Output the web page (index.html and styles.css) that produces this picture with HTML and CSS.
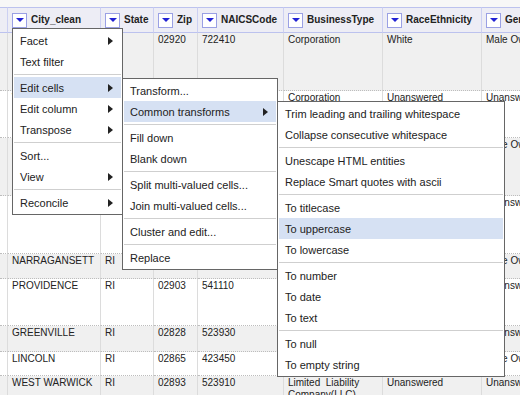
FILE: index.html
```html
<!DOCTYPE html>
<html lang="en">
<head>
<meta charset="UTF-8" />
<title>Edit cells - Common transforms</title>
<link rel="stylesheet" href="styles.css">
</head>
<body>

<table class="grid">
  <colgroup>
    <col class="c-num"><col class="c-city"><col class="c-state"><col class="c-zip">
    <col class="c-naics"><col class="c-type"><col class="c-race"><col class="c-gender">
  </colgroup>
  <thead>
    <tr>
      <th></th>
      <th><div class="hd"><span class="drop"></span>City_clean</div></th>
      <th><div class="hd"><span class="drop"></span>State</div></th>
      <th><div class="hd"><span class="drop"></span>Zip</div></th>
      <th><div class="hd"><span class="drop"></span>NAICSCode</div></th>
      <th><div class="hd"><span class="drop"></span>BusinessType</div></th>
      <th><div class="hd"><span class="drop"></span>RaceEthnicity</div></th>
      <th><div class="hd"><span class="drop"></span>Gender</div></th>
    </tr>
  </thead>
  <tbody>
    <tr class="odd h58">
      <td></td><td>CRANSTON</td><td>RI</td><td>02920</td><td>722410</td>
      <td>Corporation</td><td>White</td><td class="nowrap">Male Owned</td>
    </tr>
    <tr class="h47">
      <td></td><td>WARWICK</td><td>RI</td><td>02886</td><td>541611</td>
      <td>Corporation</td><td>Unanswered</td><td class="nowrap">Unanswered</td>
    </tr>
    <tr class="odd h58">
      <td></td><td>PROVIDENCE</td><td>RI</td><td>02908</td><td>621210</td>
      <td>Corporation</td><td>White</td><td class="nowrap">Male Owned</td>
    </tr>
    <tr class="h58">
      <td></td><td>NEWPORT</td><td>RI</td><td>02840</td><td>722511</td>
      <td>Sole Proprietorship</td><td>Unanswered</td><td class="nowrap">Unanswered</td>
    </tr>
    <tr class="odd h25">
      <td></td><td>NARRAGANSETT</td><td>RI</td><td>02882</td><td>713940</td>
      <td>Corporation</td><td>White</td><td class="nowrap">Male Owned</td>
    </tr>
    <tr class="h47">
      <td></td><td>PROVIDENCE</td><td>RI</td><td>02903</td><td>541110</td>
      <td>Corporation</td><td>Unanswered</td><td class="nowrap">Unanswered</td>
    </tr>
    <tr class="odd h26">
      <td></td><td>GREENVILLE</td><td>RI</td><td>02828</td><td>523930</td>
      <td>Corporation</td><td>Unanswered</td><td class="nowrap">Unanswered</td>
    </tr>
    <tr class="h24">
      <td></td><td>LINCOLN</td><td>RI</td><td>02865</td><td>423450</td>
      <td>Corporation</td><td>White</td><td class="nowrap">Male Owned</td>
    </tr>
    <tr class="odd h40">
      <td></td><td>WEST WARWICK</td><td>RI</td><td>02893</td><td>523910</td>
      <td>Limited&nbsp; Liability Company(LLC)</td><td>Unanswered</td><td class="nowrap">Unanswered</td>
    </tr>
  </tbody>
</table>

<div class="menu menu1">
  <div class="item sub">Facet</div>
  <div class="item">Text filter</div>
  <div class="sep"></div>
  <div class="item sub on">Edit cells</div>
  <div class="item sub">Edit column</div>
  <div class="item sub">Transpose</div>
  <div class="sep"></div>
  <div class="item">Sort...</div>
  <div class="item sub">View</div>
  <div class="sep"></div>
  <div class="item sub">Reconcile</div>
</div>

<div class="menu menu2">
  <div class="item">Transform...</div>
  <div class="item sub on">Common transforms</div>
  <div class="sep"></div>
  <div class="item">Fill down</div>
  <div class="item">Blank down</div>
  <div class="sep"></div>
  <div class="item">Split multi-valued cells...</div>
  <div class="item">Join multi-valued cells...</div>
  <div class="sep"></div>
  <div class="item">Cluster and edit...</div>
  <div class="sep"></div>
  <div class="item">Replace</div>
</div>

<div class="menu menu3">
  <div class="item">Trim leading and trailing whitespace</div>
  <div class="item">Collapse consecutive whitespace</div>
  <div class="sep"></div>
  <div class="item">Unescape HTML entities</div>
  <div class="item">Replace Smart quotes with ascii</div>
  <div class="sep"></div>
  <div class="item">To titlecase</div>
  <div class="item on">To uppercase</div>
  <div class="item">To lowercase</div>
  <div class="sep"></div>
  <div class="item">To number</div>
  <div class="item">To date</div>
  <div class="item">To text</div>
  <div class="sep"></div>
  <div class="item">To null</div>
  <div class="item">To empty string</div>
</div>

</body>
</html>
```

FILE: styles.css
```css
* {
  box-sizing: border-box;
}
body {
  margin: 0;
  background: #f7f7f7;
  font-family: "Liberation Sans", Arial, sans-serif;
  color: #222;
  overflow: hidden;
}

/* data grid */
.grid {
  margin-top: 7px;
  border-collapse: separate;
  border-spacing: 0;
  table-layout: fixed;
  width: 582px;
  font-size: 10px;
  line-height: 12px;
}
.c-num { width: 8px; }
.c-city { width: 93px; }
.c-state { width: 53px; }
.c-zip { width: 44px; }
.c-naics { width: 86px; }
.c-type { width: 99px; }
.c-race { width: 99px; }
.c-gender { width: 100px; }

.grid th {
  height: 26px;
  padding: 0 4px;
  background: #ededf5;
  border-top: 1px solid #bcc2ee;
  border-bottom: 1px solid #bcc2ee;
  border-right: 1px solid #ccd0f2;
  text-align: left;
  font-weight: bold;
  white-space: nowrap;
  overflow: hidden;
}
.hd {
  display: flex;
  align-items: center;
  gap: 4px;
}
.drop {
  flex: none;
  width: 15px;
  height: 15px;
  background: #fff;
  border: 1px solid #9aa0e4;
  display: flex;
  align-items: center;
  justify-content: center;
}
.drop::after {
  content: "";
  border-left: 4px solid transparent;
  border-right: 4px solid transparent;
  border-top: 4px solid #2222d4;
}

.grid td {
  padding: 1px 4px;
  vertical-align: top;
  background: #fff;
  border-right: 1px solid #dcdcdc;
  border-bottom: 1px dotted #bdbdbd;
  overflow: hidden;
}
.grid tr.odd td {
  background: #f0f0f0;
}
.grid td.nowrap {
  white-space: nowrap;
}
.h58 td { height: 58px; }
.h47 td { height: 47px; }
.h40 td { height: 40px; }
.h26 td { height: 26px; }
.h25 td { height: 25px; }
.h24 td { height: 24px; }

/* context menus */
.menu {
  position: absolute;
  background: #fff;
  border: 1px solid #666;
  padding: 1px;
  font-size: 11px;
  color: #222;
}
.menu1 { left: 12px; top: 28px; width: 111px; z-index: 1; }
.menu2 { left: 122px; top: 78px; width: 156px; z-index: 2; }
.menu3 { left: 277px; top: 101px; width: 228px; z-index: 3; }

.item {
  height: 21px;
  padding: 0 8px 0 6px;
  display: flex;
  align-items: center;
  justify-content: space-between;
  white-space: nowrap;
}
.item.on {
  background: #d6e1f3;
}
.item.sub::after {
  content: "";
  border-left: 5px solid #222;
  border-top: 4px solid transparent;
  border-bottom: 4px solid transparent;
}
.sep {
  height: 1px;
  margin: 2px 0;
  background: #cfcfcf;
}
```
